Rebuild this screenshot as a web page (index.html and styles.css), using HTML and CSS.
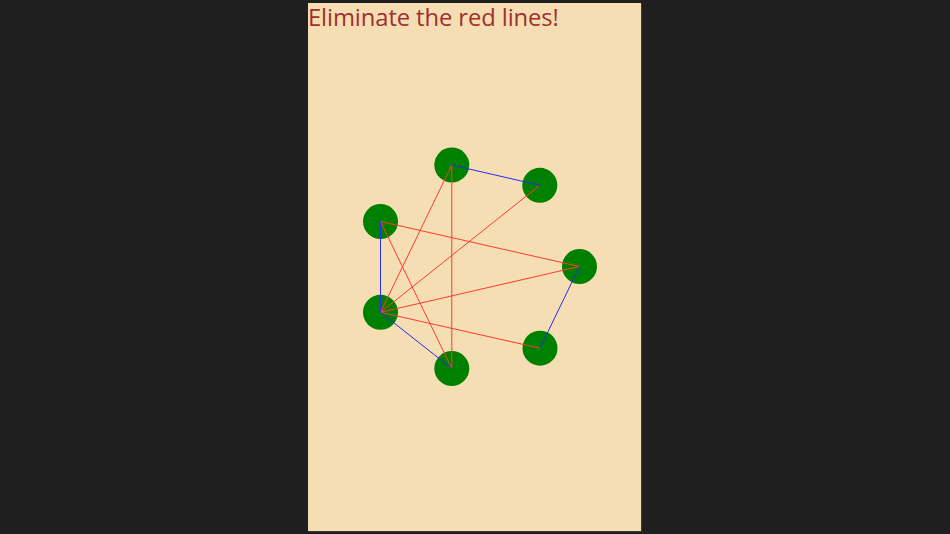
FILE: index.html
```html
<!DOCTYPE html>
<html>
<head>
<meta charset="utf-8">
<link rel="stylesheet" href="styles.css">
</head>
<body>
<div class="stage">
  <div class="panel">
    <h1 class="title">Eliminate the red lines!</h1>
    <svg class="graph" width="333" height="528" viewBox="0 0 333 528" xmlns="http://www.w3.org/2000/svg">
      <g class="nodes">
        <circle cx="143.8" cy="162" r="17.5"/>
        <circle cx="231.8" cy="182.3" r="17.5"/>
        <circle cx="72.5" cy="218.5" r="17.5"/>
        <circle cx="271.5" cy="263.5" r="17.5"/>
        <circle cx="72.5" cy="309.3" r="17.5"/>
        <circle cx="232" cy="345.2" r="17.5"/>
        <circle cx="143.8" cy="365.5" r="17.5"/>
      </g>
      <g class="red">
        <line x1="143.8" y1="162" x2="72.5" y2="309.3"/>
        <line x1="143.8" y1="162" x2="143.8" y2="365.5"/>
        <line x1="231.8" y1="182.3" x2="72.5" y2="309.3"/>
        <line x1="72.5" y1="218.5" x2="271.5" y2="263.5"/>
        <line x1="72.5" y1="218.5" x2="143.8" y2="365.5"/>
        <line x1="72.5" y1="309.3" x2="271.5" y2="263.5"/>
        <line x1="72.5" y1="309.3" x2="232" y2="345.2"/>
      </g>
      <g class="blue">
        <line x1="143.8" y1="162" x2="231.8" y2="182.3"/>
        <line x1="72.5" y1="218.5" x2="72.5" y2="309.3"/>
        <line x1="72.5" y1="309.3" x2="143.8" y2="365.5"/>
        <line x1="271.5" y1="263.5" x2="232" y2="345.2"/>
      </g>
    </svg>
  </div>
</div>
</body>
</html>
```
FILE: styles.css
```css
html, body {
  margin: 0;
  padding: 0;
  background: #1f1f1f;
  width: 950px;
  height: 534px;
  overflow: hidden;
}
.stage {
  display: flex;
  justify-content: flex-start;
  padding: 3px 0 0 308px;
}
.panel {
  position: relative;
  width: 333px;
  height: 528px;
  background: #f5deb3;
  box-shadow: 1px 1px 0 #3a3a3a;
}
.title {
  margin: 0;
  padding: 0;
  position: relative;
  z-index: 1;
  font-family: "Open Sans", "Noto Sans", sans-serif;
  font-weight: 400;
  font-size: 23.8px;
  line-height: 29px;
  letter-spacing: -0.1px;
  color: #a0302e;
  white-space: nowrap;
}
.graph {
  position: absolute;
  left: 0;
  top: 0;
}
.nodes circle {
  fill: #008000;
}
.red line {
  stroke: #ff3b2e;
  stroke-width: 1;
}
.blue line {
  stroke: #2a2af0;
  stroke-width: 1;
}
```
